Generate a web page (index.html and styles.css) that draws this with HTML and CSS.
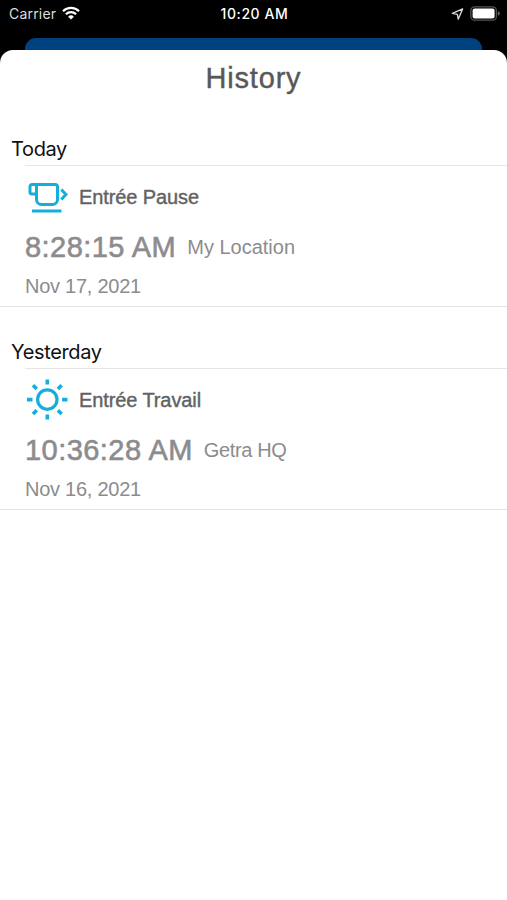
FILE: index.html
```html
<!DOCTYPE html>
<html lang="en">
<head>
  <meta charset="UTF-8" />
  <meta name="viewport" content="width=device-width, initial-scale=1.0"/>
  <title>History</title>
  <link rel="stylesheet" href="styles.css">
</head>
<body>
  <div class="status-bar">
    <div class="carrier">
      <span class="carrier-name">Carrier</span>
      <svg class="wifi" width="18" height="14" viewBox="0 0 18 14">
        <path d="M1 5.2a11.4 11.4 0 0 1 16 0M3.9 8.2a7.2 7.2 0 0 1 10.2 0" fill="none" stroke="#fff" stroke-width="2.2"/>
        <path d="M9 13.5L6.1 10.7a4.2 4.2 0 0 1 5.8 0z" fill="#fff"/>
      </svg>
    </div>
    <span class="clock">10:20 AM</span>
    <div class="indicators">
      <svg width="13" height="12" viewBox="0 0 13 12">
        <path d="M11.6 0.9L1.4 5.4l5 1 .8 4.800z" fill="none" stroke="#ddd" stroke-width="1.3" stroke-linejoin="round"/>
      </svg>
      <svg class="battery" width="30" height="16" viewBox="0 0 30 16">
        <rect x="0.8" y="0.8" width="25.6" height="13.4" rx="3.8" fill="none" stroke="#555" stroke-width="1.3"/>
        <rect x="2.6" y="2.6" width="22" height="9.8" rx="2" fill="#fff"/>
        <path d="M27.8 5.2v4.6q2-.6 2-2.3t-2-2.3z" fill="#666"/>
      </svg>
    </div>
  </div>

  <div class="back-card"></div>

  <div class="sheet">
    <h1>History</h1>

    <h2>Today</h2>
    <div class="entry">
      <div class="entry-type">
        <svg class="icon" width="42" height="42" viewBox="0 0 42 42" fill="none" stroke="#14aedc" stroke-width="3">
          <path d="M11.500 7.400H30.500a2 2 0 0 1 2 2V22.500a5 5 0 0 1-5 5H16.500a5 5 0 0 1-5-5z"/>
          <path d="M12 7.400H7a2 2 0 0 0-2 2V15a2 2 0 0 0 2 2h4.500"/>
          <path d="M36.300 12.600l4.600 5-4.600 5M7 34h29.500"/>
        </svg>
        <span class="name">Entrée Pause</span>
      </div>
      <div class="entry-time">
        <span class="time">8:28:15 AM</span>
        <span class="place">My Location</span>
      </div>
      <div class="date">Nov 17, 2021</div>
    </div>

    <h2>Yesterday</h2>
    <div class="entry">
      <div class="entry-type">
        <svg class="icon" width="42" height="42" viewBox="0 0 42 42" fill="none" stroke="#14aedc" stroke-width="3.600">
          <circle cx="22.300" cy="19.600" r="9.700" stroke-width="3.200"/>
          <path d="M22.300 -.5v5M22.300 34.600v5M2 19.600h5.500M37 19.600h5.500M8 5.300L11.700 9M32.900 30.200l3.700 3.700M36.600 5.300L32.900 9M11.700 30.200L8 33.900"/>
        </svg>
        <span class="name">Entrée Travail</span>
      </div>
      <div class="entry-time">
        <span class="time">10:36:28 AM</span>
        <span class="place hq">Getra HQ</span>
      </div>
      <div class="date">Nov 16, 2021</div>
    </div>
  </div>
</body>
</html>
```
FILE: styles.css
```css
* {
  box-sizing: border-box;
}
body {
  margin: 0;
  height: 900px;
  display: flex;
  flex-direction: column;
  overflow: hidden;
  background: #000;
  font-family: "Liberation Sans", Arial, sans-serif;
}
.status-bar {
  display: grid;
  grid-template-columns: 1fr auto 1fr;
  align-items: center;
  height: 27px;
  margin-bottom: 11px;
  padding: 0 7px 0 9px;
  color: #fff;
  font-family: Inter, sans-serif;
  font-size: 14px;
}
.carrier {
  display: flex;
  align-items: center;
  gap: 6px;
}
.carrier-name {
  color: #ddd;
  letter-spacing: 0.2px;
}
.wifi {
  margin-top: -2px;
}
.clock {
  font-weight: 500;
  letter-spacing: 0.6px;
}
.indicators {
  display: flex;
  align-items: center;
  justify-content: flex-end;
  gap: 6px;
}
.back-card {
  height: 12px;
  margin: 0 25px;
  background: #00417f;
  border-radius: 11px 11px 0 0;
}
.sheet {
  flex: 1;
  background: #fff;
  border-radius: 13px 13px 0 0;
}
h1 {
  height: 54px;
  margin: 0;
  color: #585858;
  font-size: 29px;
  font-weight: normal;
  line-height: 57px;
  letter-spacing: 0.8px;
  text-align: center;
  -webkit-text-stroke: 0.4px #585858;
}
h2 {
  height: 61px;
  margin: 0;
  padding: 28px 0 0 11px;
  color: #111;
  font-family: Inter, sans-serif;
  font-size: 20px;
  font-weight: normal;
  line-height: 34px;
  letter-spacing: -0.35px;
}
.entry {
  height: 142px;
  padding-left: 25px;
  border-bottom: 1px solid #e3e3e3;
  color: #8c8c8e;
  font-size: 20px;
}
.entry-type {
  display: flex;
  align-items: center;
  gap: 12px;
  height: 64px;
  border-top: 1px solid #e6e6e6;
}
.icon {
  overflow: visible;
}
.name {
  color: #626264;
  letter-spacing: -0.1px;
  -webkit-text-stroke: 0.4px #626264;
}
.entry-time {
  display: flex;
  align-items: center;
  gap: 11px;
  height: 36px;
}
.time {
  font-size: 29px;
  letter-spacing: 0.45px;
  -webkit-text-stroke: 0.6px #8c8c8e;
}
.hq {
  letter-spacing: -0.35px;
}
.date {
  line-height: 42px;
  letter-spacing: -0.25px;
}
```
